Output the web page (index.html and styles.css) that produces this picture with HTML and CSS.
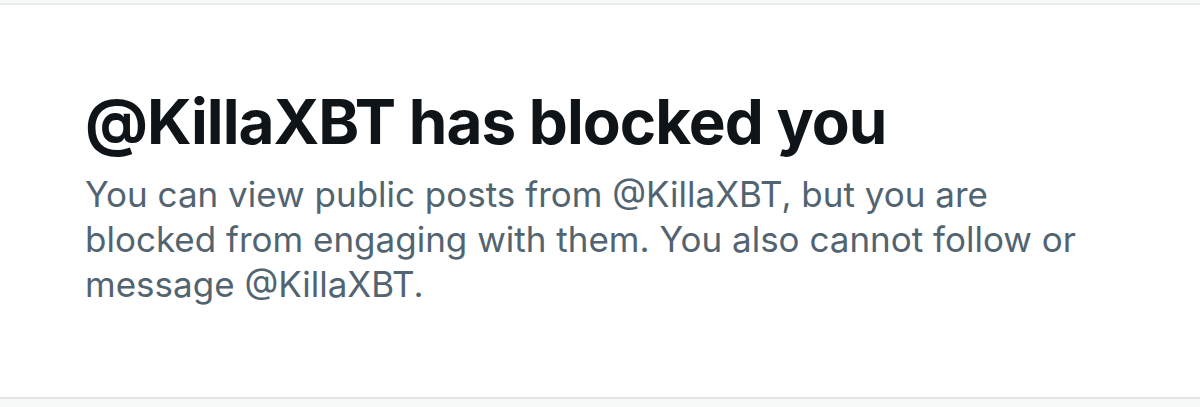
FILE: index.html
```html
<!DOCTYPE html>
<html>
<head>
<meta charset="utf-8">
<link rel="stylesheet" href="styles.css">
</head>
<body>
<div class="frame">
  <section class="blocked">
    <h1 class="title">@KillaXBT has blocked you</h1>
    <p class="desc">You can view public posts from @KillaXBT, but you are blocked from engaging with them. You also cannot follow or message @KillaXBT.</p>
  </section>
</div>
</body>
</html>
```
FILE: styles.css
```css
html, body {
  margin: 0;
  padding: 0;
  background: #ffffff;
}
.frame {
  width: 1200px;
  height: 407px;
  box-sizing: border-box;
  padding-top: 3px;
  background: #f7f9f9;
}
.blocked {
  height: 396px;
  box-sizing: border-box;
  background: #ffffff;
  border-top: 2px solid #e9eced;
  border-bottom: 2px solid #e3e6e7;
  padding: 81px 0 0 85px;
  font-family: "Inter", "Liberation Sans", Arial, sans-serif;
}
.title {
  margin: 0 0 14px;
  font-size: 62px;
  line-height: 72px;
  font-weight: 700;
  letter-spacing: -1px;
  color: #0f1419;
}
.desc {
  margin: 0;
  max-width: 1020px;
  font-size: 35px;
  line-height: 45px;
  font-weight: 400;
  color: #536471;
}
```
